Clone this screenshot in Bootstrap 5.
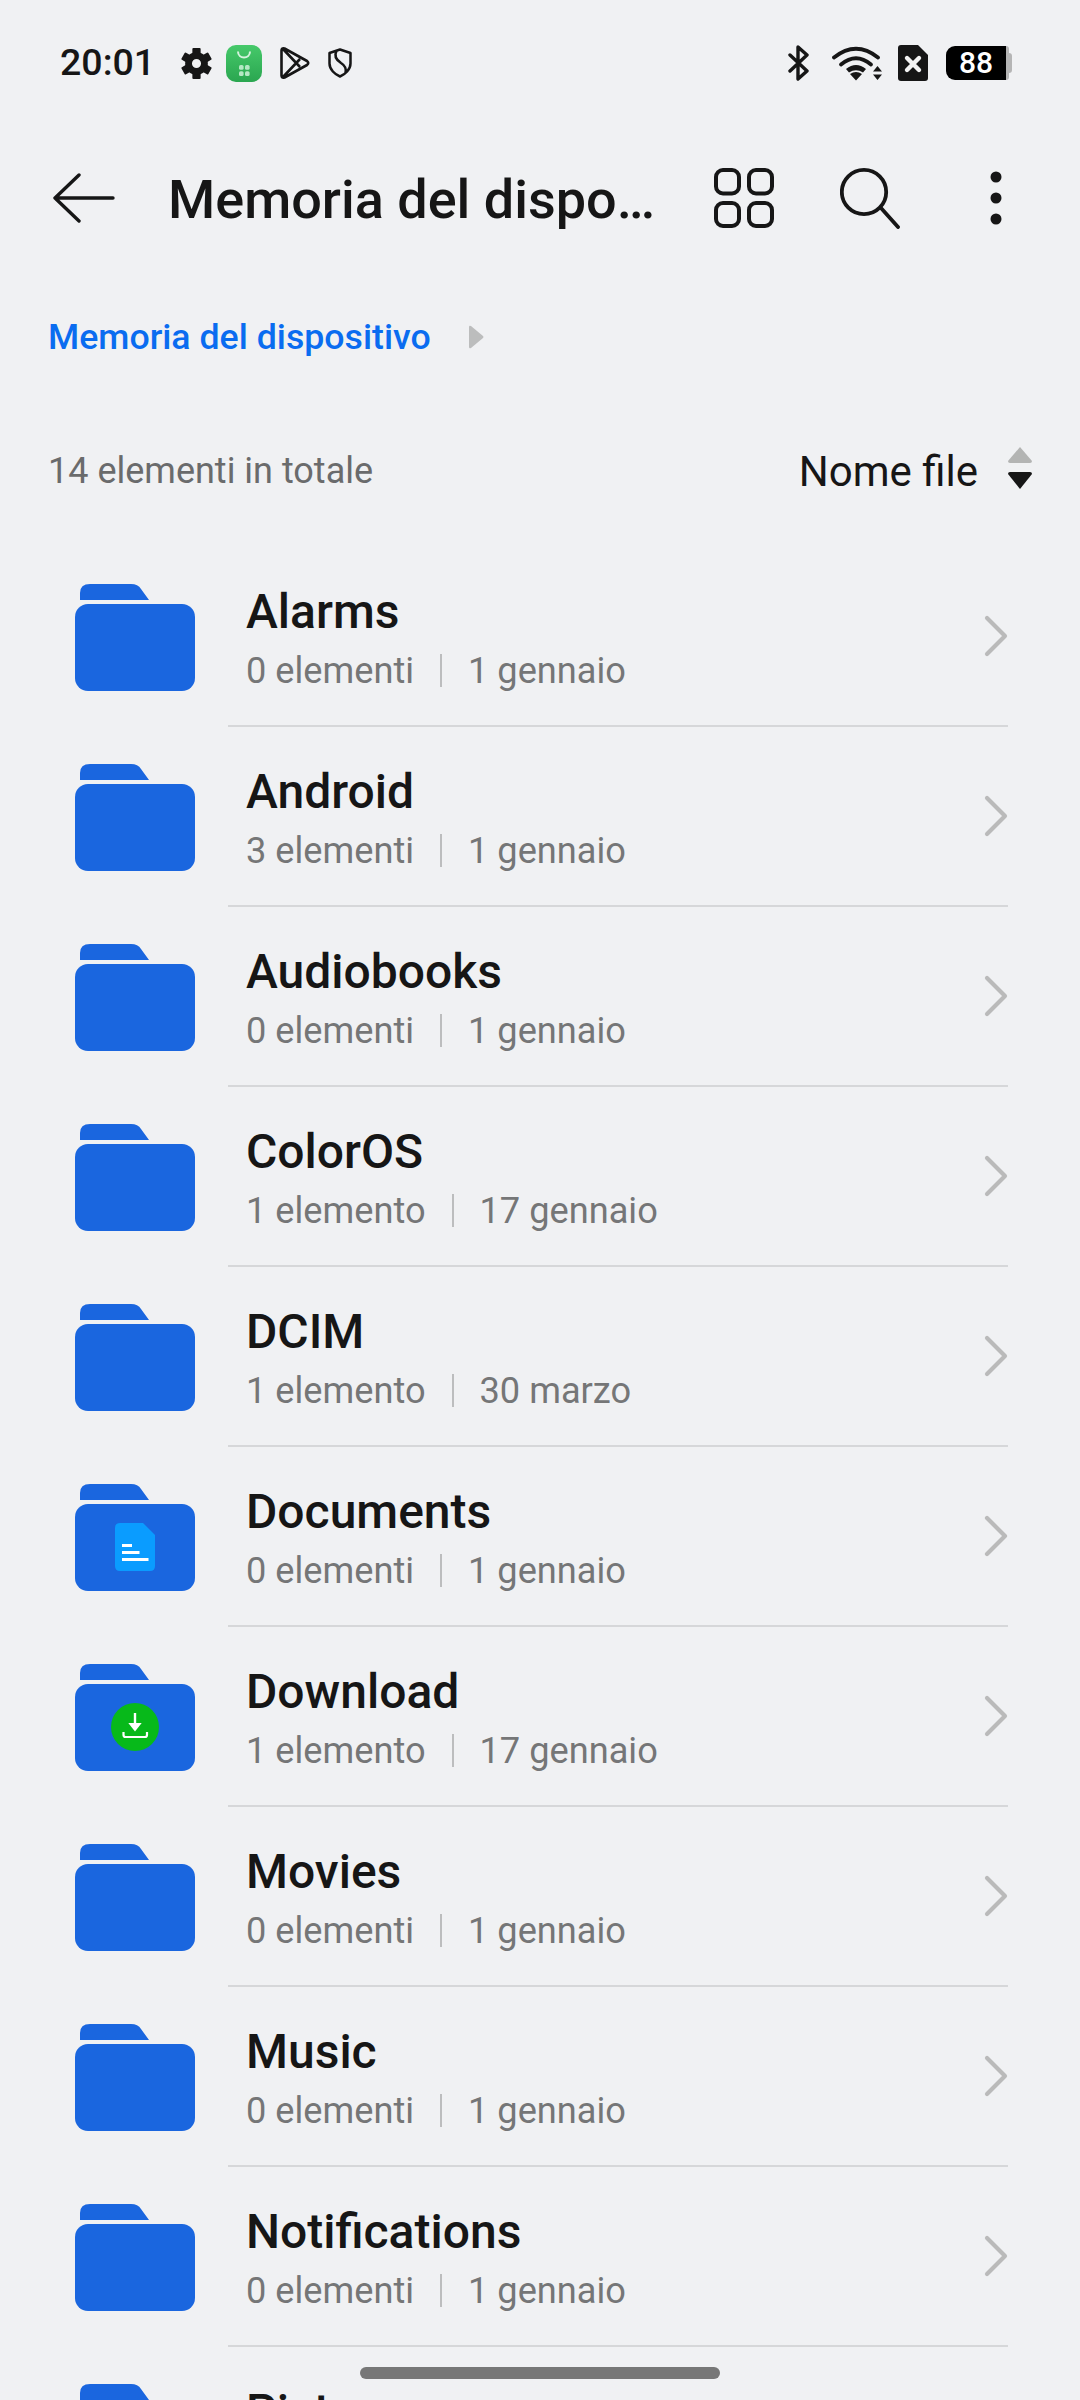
<!DOCTYPE html>
<html lang="it">
<head>
<meta charset="utf-8">
<title>Memoria del dispositivo</title>
<link rel="stylesheet" href="https://cdn.jsdelivr.net/npm/bootstrap@5.3.0/dist/css/bootstrap.min.css">
<style>
html,body{height:2400px;overflow:hidden}
body{background:#f0f1f3;color:#161616;font-family:Roboto,"Liberation Sans",sans-serif}
svg{display:block;flex:none}
.status-row{height:126px;padding-left:60px}
.clock{font-size:37.500px;font-weight:500;width:121px;line-height:1}
.ic-green{margin-left:14px}
.ic-play{margin-left:17px}
.ic-shield{margin-left:18px}
.status-right{margin-left:auto;padding-right:68px}
.ic-wifi{margin-left:23px}
.ic-sim{margin-left:16px}
.batt{margin-left:18px}
.batt-fill{width:60px;height:34px;background:#000;color:#fff;border-radius:9px 0 0 9px;font-size:30px;font-weight:500;line-height:34px;text-align:center}
.batt-rest{width:3px;height:34px;background:#b5b5b5;border-radius:0 5px 5px 0}
.batt-nub{width:3px;height:20px;background:#b5b5b5;border-radius:0 3px 3px 0}
.head-row{height:144px;padding-left:53px;padding-right:78px}
.head-title{font-size:54px;font-weight:500;line-height:64px;margin-left:53px;padding-top:3px;flex-grow:1;white-space:nowrap}
.ic-search{margin-left:66px}
.ic-dots{margin-left:90px}
.crumb-row{height:134px;padding-left:48px}
.crumb{color:#0a6cf0;font-size:35.700px;font-weight:500;line-height:40px}
.ic-crumb{margin-left:37px}
.sum-row{height:132px;margin-bottom:11px;padding-left:48px;padding-right:48px}
.sum-text{color:#6a6b6c;font-size:36px;line-height:40px;padding-top:2px}
.sort-text{font-size:42px;line-height:50px;margin-left:auto;padding-top:3px}
.ic-sort{margin-left:30px;margin-bottom:4px}
.file-list{background:transparent;border-radius:0}
.file-row{height:180px;background:transparent;border:0;padding:0 0 0 75px;color:inherit}
.file-body{margin-left:33px;margin-right:72px;height:100%;padding-left:18px;border-bottom:2px solid #d6d7d9}
.file-text{margin-top:4px}
.file-name{font-size:48px;font-weight:500;line-height:56px;white-space:nowrap}
.file-meta{color:#757677;font-size:36.200px;line-height:44px;min-height:44px;margin-top:9px;white-space:nowrap}
.meta-sep{width:2px;height:33px;background:#bcbdbe;margin:0 26px}
.home-bar{position:fixed;left:360px;top:2367px;width:360px;height:12px;background:#777;border-radius:6px}
</style>
</head>
<body>
<svg width="0" height="0" class="position-absolute">
<defs>
<symbol id="folder" viewBox="0 0 120 107">
<path fill="#1a66df" d="M5 16V9Q5 0 15 0H56Q63 0 66 5L74 16Z"/>
<rect fill="#1a66df" x="0" y="20" width="120" height="87" rx="13"/>
</symbol>
<symbol id="chev" viewBox="0 0 24 42">
<path d="M3 3L21 21L3 39" fill="none" stroke="#bababa" stroke-width="4.2" stroke-linecap="round" stroke-linejoin="round"/>
</symbol>
<linearGradient id="gr" x1="0" y1="0" x2="0" y2="1"><stop offset="0" stop-color="#46c96a"/><stop offset="1" stop-color="#2aa650"/></linearGradient>
</defs>
</svg>

<div class="status-row d-flex align-items-center">
<span class="clock">20:01</span>
<svg width="31" height="31" viewBox="0 0 30 30"><g fill="#161616"><rect x="11" y="0" width="8" height="8" rx="1"/><rect x="11" y="0" width="8" height="8" rx="1" transform="rotate(60 15 15)"/><rect x="11" y="0" width="8" height="8" rx="1" transform="rotate(120 15 15)"/><rect x="11" y="0" width="8" height="8" rx="1" transform="rotate(180 15 15)"/><rect x="11" y="0" width="8" height="8" rx="1" transform="rotate(240 15 15)"/><rect x="11" y="0" width="8" height="8" rx="1" transform="rotate(300 15 15)"/></g><circle cx="15" cy="15" r="7.7" fill="none" stroke="#161616" stroke-width="6.6"/></svg>
<svg class="ic-green" width="36" height="37" viewBox="0 0 36 37"><rect width="36" height="37" rx="10" fill="url(#gr)"/><path d="M12 6.5C12 14.5 24 14.5 24 6.5" fill="none" stroke="#d6f3de" stroke-width="2"/><g fill="#b5e8c4"><rect x="13" y="20" width="4.6" height="4.8" rx="1.6"/><rect x="19" y="20" width="4.6" height="4.8" rx="1.6"/><rect x="13" y="26.2" width="4.6" height="4.8" rx="1.6"/><rect x="19" y="26.2" width="4.6" height="4.8" rx="1.6"/></g></svg>
<svg class="ic-play" width="31" height="34" viewBox="0 0 31 34"><path d="M2.500 4.500Q2.500 1.600 5.500 2.500L28 15Q30.500 17 28 19L5.500 31.500Q2.500 32.500 2.500 29.500ZM4 3L21 21M4 31L21 13" fill="none" stroke="#161616" stroke-width="2.6" stroke-linejoin="round"/></svg>
<svg class="ic-shield" width="24" height="30" viewBox="0 0 24 30"><path d="M12 1.500L22.500 5V15.500C22.500 21.500 17 26.500 12 28.500C7 26.500 1.500 21.500 1.500 15.500V5ZM8.500 3C5.500 8.500 8.500 12 13 15C17 17.500 18.500 21 17.500 25" fill="none" stroke="#161616" stroke-width="2.5" stroke-linejoin="round"/></svg>

<div class="status-right d-flex align-items-center">
<svg width="21" height="36" viewBox="0 0 21 36"><path d="M2 10L19 26L10 34V2L19 10L2 26" fill="none" stroke="#161616" stroke-width="3.400" stroke-linecap="round" stroke-linejoin="round"/></svg>
<svg class="ic-wifi" width="50" height="36" viewBox="0 0 50 36"><g fill="none" stroke="#161616" stroke-width="3.800" stroke-linecap="round"><path d="M2 12.500Q24 -5 46 12.500"/><path d="M9 19.500Q24 7 39 19.500"/></g><path fill="#161616" d="M14 24Q24 16 34 24L31 27.500Q24 23 17 27.500ZM18 29Q24 25 30 29L24 35.500Z"/><path fill="#161616" d="M45.500 21L50 26.500H41ZM41 29.500H50L45.500 35Z"/></svg>
<svg class="ic-sim" width="30" height="36" viewBox="0 0 30 36"><path fill="#161616" d="M3 0H20L30 10V33Q30 36 27 36H3Q0 36 0 33V3Q0 0 3 0Z"/><path d="M9 13L21 25M21 13L9 25" stroke="#f4f4f4" stroke-width="4.400" stroke-linecap="round"/></svg>
<div class="batt d-flex align-items-center"><div class="batt-fill">88</div><div class="batt-rest"></div><div class="batt-nub"></div></div>
</div>
</div>

<nav class="head-row d-flex align-items-center">
<svg width="62" height="50" viewBox="0 0 62 50"><path d="M60 25H2M26 2L2 25L26 48" fill="none" stroke="#161616" stroke-width="3.400" stroke-linecap="round" stroke-linejoin="round"/></svg>
<span class="head-title">Memoria del dispo…</span>
<svg width="60" height="60" viewBox="0 0 60 60"><g fill="none" stroke="#161616" stroke-width="4"><rect x="2" y="2" width="23" height="23.500" rx="7"/><rect x="35" y="2" width="23" height="23.500" rx="7"/><rect x="2" y="35" width="23" height="23" rx="7"/><rect x="35" y="35" width="23" height="23" rx="7"/></g></svg>
<svg class="ic-search" width="60" height="62" viewBox="0 0 60 62"><circle cx="24" cy="25" r="22.200" fill="none" stroke="#161616" stroke-width="3.800"/><path d="M41 41L58 60" stroke="#161616" stroke-width="3.800" stroke-linecap="round"/></svg>
<svg class="ic-dots" width="12" height="54" viewBox="0 0 12 54"><circle cx="6" cy="6" r="5.500" fill="#161616"/><circle cx="6" cy="27" r="5.500" fill="#161616"/><circle cx="6" cy="48" r="5.500" fill="#161616"/></svg>
</nav>

<div class="crumb-row d-flex align-items-center">
<span class="crumb">Memoria del dispositivo</span>
<svg class="ic-crumb" width="16" height="24" viewBox="0 0 16 24"><path d="M1 2Q1 0 3 1L15 11Q16 12 15 13L3 23Q1 24 1 22Z" fill="#bcbdbd"/></svg>
</div>

<div class="sum-row d-flex align-items-center">
<span class="sum-text">14 elementi in totale</span>
<span class="sort-text">Nome file</span>
<svg class="ic-sort" width="24" height="42" viewBox="0 0 24 42"><path d="M12 0L24 14Q24 16 22 16H2Q0 16 0 14Z" fill="#b3b4b3"/><path d="M2 25H22Q24 25 24 27L12 42L0 27Q0 25 2 25Z" fill="#161616"/></svg>
</div>

<ul class="list-group file-list">
<li class="list-group-item file-row d-flex align-items-center">
<svg width="120" height="107"><use href="#folder"/></svg>
<div class="file-body flex-grow-1 d-flex align-items-center justify-content-between">
<div class="file-text"><div class="file-name">Alarms</div><div class="file-meta d-flex align-items-center"><span>0 elementi</span><span class="meta-sep"></span><span>1 gennaio</span></div></div>
<svg width="24" height="42"><use href="#chev"/></svg>
</div>
</li>
<li class="list-group-item file-row d-flex align-items-center">
<svg width="120" height="107"><use href="#folder"/></svg>
<div class="file-body flex-grow-1 d-flex align-items-center justify-content-between">
<div class="file-text"><div class="file-name">Android</div><div class="file-meta d-flex align-items-center"><span>3 elementi</span><span class="meta-sep"></span><span>1 gennaio</span></div></div>
<svg width="24" height="42"><use href="#chev"/></svg>
</div>
</li>
<li class="list-group-item file-row d-flex align-items-center">
<svg width="120" height="107"><use href="#folder"/></svg>
<div class="file-body flex-grow-1 d-flex align-items-center justify-content-between">
<div class="file-text"><div class="file-name">Audiobooks</div><div class="file-meta d-flex align-items-center"><span>0 elementi</span><span class="meta-sep"></span><span>1 gennaio</span></div></div>
<svg width="24" height="42"><use href="#chev"/></svg>
</div>
</li>
<li class="list-group-item file-row d-flex align-items-center">
<svg width="120" height="107"><use href="#folder"/></svg>
<div class="file-body flex-grow-1 d-flex align-items-center justify-content-between">
<div class="file-text"><div class="file-name">ColorOS</div><div class="file-meta d-flex align-items-center"><span>1 elemento</span><span class="meta-sep"></span><span>17 gennaio</span></div></div>
<svg width="24" height="42"><use href="#chev"/></svg>
</div>
</li>
<li class="list-group-item file-row d-flex align-items-center">
<svg width="120" height="107"><use href="#folder"/></svg>
<div class="file-body flex-grow-1 d-flex align-items-center justify-content-between">
<div class="file-text"><div class="file-name">DCIM</div><div class="file-meta d-flex align-items-center"><span>1 elemento</span><span class="meta-sep"></span><span>30 marzo</span></div></div>
<svg width="24" height="42"><use href="#chev"/></svg>
</div>
</li>
<li class="list-group-item file-row d-flex align-items-center">
<svg width="120" height="107" viewBox="0 0 120 107"><use href="#folder" width="120" height="107"/><path fill="#0a9cff" d="M45 39H68L80 51V82Q80 87 75 87H45Q40 87 40 82V44Q40 39 45 39Z"/><g fill="#fff"><rect x="47" y="60" width="10" height="3"/><rect x="47" y="67" width="17.500" height="3"/><rect x="47" y="74" width="26.500" height="3"/></g></svg>
<div class="file-body flex-grow-1 d-flex align-items-center justify-content-between">
<div class="file-text"><div class="file-name">Documents</div><div class="file-meta d-flex align-items-center"><span>0 elementi</span><span class="meta-sep"></span><span>1 gennaio</span></div></div>
<svg width="24" height="42"><use href="#chev"/></svg>
</div>
</li>
<li class="list-group-item file-row d-flex align-items-center">
<svg width="120" height="107" viewBox="0 0 120 107"><use href="#folder" width="120" height="107"/><circle cx="60" cy="63" r="24" fill="#07b91a"/><path d="M60 49V60" stroke="#fff" stroke-width="2.400"/><path d="M53.300 59H66.700L60 67.500Z" fill="#fff"/><path d="M48.500 68V71Q48.500 73 50.500 73H70Q72 73 72 71V68" fill="none" stroke="#fff" stroke-width="2.200"/></svg>
<div class="file-body flex-grow-1 d-flex align-items-center justify-content-between">
<div class="file-text"><div class="file-name">Download</div><div class="file-meta d-flex align-items-center"><span>1 elemento</span><span class="meta-sep"></span><span>17 gennaio</span></div></div>
<svg width="24" height="42"><use href="#chev"/></svg>
</div>
</li>
<li class="list-group-item file-row d-flex align-items-center">
<svg width="120" height="107"><use href="#folder"/></svg>
<div class="file-body flex-grow-1 d-flex align-items-center justify-content-between">
<div class="file-text"><div class="file-name">Movies</div><div class="file-meta d-flex align-items-center"><span>0 elementi</span><span class="meta-sep"></span><span>1 gennaio</span></div></div>
<svg width="24" height="42"><use href="#chev"/></svg>
</div>
</li>
<li class="list-group-item file-row d-flex align-items-center">
<svg width="120" height="107"><use href="#folder"/></svg>
<div class="file-body flex-grow-1 d-flex align-items-center justify-content-between">
<div class="file-text"><div class="file-name">Music</div><div class="file-meta d-flex align-items-center"><span>0 elementi</span><span class="meta-sep"></span><span>1 gennaio</span></div></div>
<svg width="24" height="42"><use href="#chev"/></svg>
</div>
</li>
<li class="list-group-item file-row d-flex align-items-center">
<svg width="120" height="107"><use href="#folder"/></svg>
<div class="file-body flex-grow-1 d-flex align-items-center justify-content-between">
<div class="file-text"><div class="file-name">Notifications</div><div class="file-meta d-flex align-items-center"><span>0 elementi</span><span class="meta-sep"></span><span>1 gennaio</span></div></div>
<svg width="24" height="42"><use href="#chev"/></svg>
</div>
</li>
<li class="list-group-item file-row d-flex align-items-center">
<svg width="120" height="107"><use href="#folder"/></svg>
<div class="file-body flex-grow-1 d-flex align-items-center justify-content-between">
<div class="file-text"><div class="file-name">Pictures</div><div class="file-meta"></div></div>
<svg width="24" height="42"><use href="#chev"/></svg>
</div>
</li>
</ul>
<div class="home-bar"></div>
<script src="https://cdn.jsdelivr.net/npm/bootstrap@5.3.0/dist/js/bootstrap.bundle.min.js"></script>
</body>
</html>
